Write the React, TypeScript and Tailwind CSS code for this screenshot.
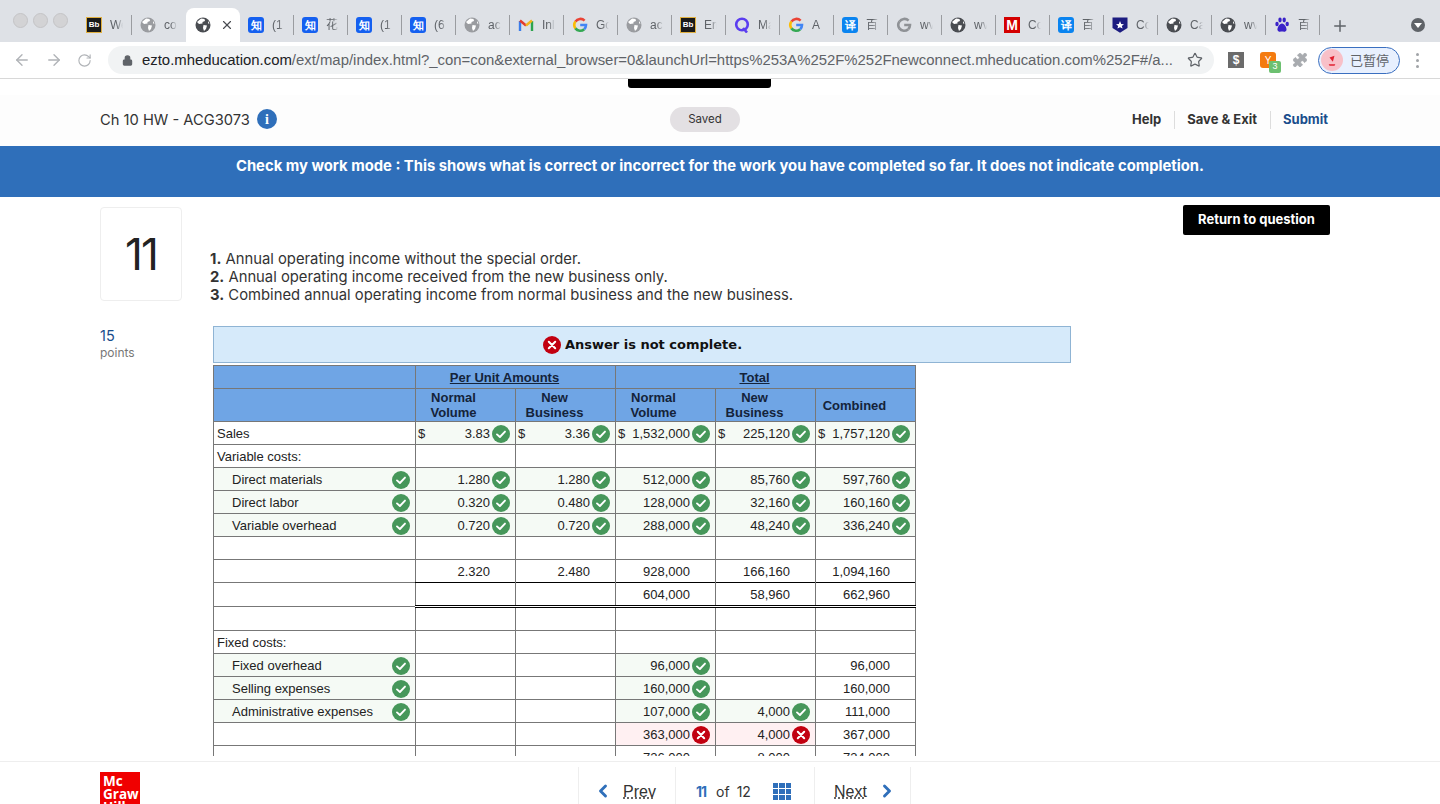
import React from "react";
import { ArrowLeft, ArrowRight, RotateCw, Lock, Star, Puzzle, Plus, ChevronLeft, ChevronRight, X } from "lucide-react";

type Fav = "bb" | "globe" | "zhi" | "gmail" | "g" | "q" | "gg" | "m" | "yi" | "shield" | "paw";
const tabs: { f: Fav; t: string; dark?: boolean; active?: boolean }[] = [
  { f: "bb", t: "We" }, { f: "globe", t: "co" }, { f: "globe", t: "", dark: true, active: true },
  { f: "zhi", t: "(1" }, { f: "zhi", t: "花" }, { f: "zhi", t: "(1" }, { f: "zhi", t: "(6" },
  { f: "globe", t: "ac" }, { f: "gmail", t: "Inl" }, { f: "g", t: "Go" }, { f: "globe", t: "ac" },
  { f: "bb", t: "Err" }, { f: "q", t: "Ma" }, { f: "g", t: "A" }, { f: "yi", t: "百" },
  { f: "gg", t: "wv" }, { f: "globe", t: "wv", dark: true }, { f: "m", t: "Co" }, { f: "yi", t: "百" },
  { f: "shield", t: "Co" }, { f: "globe", t: "Ca", dark: true }, { f: "globe", t: "wv", dark: true }, { f: "paw", t: "百" },
];

function Favicon({ f, dark }: { f: Fav; dark?: boolean }) {
  if (f === "bb") return <span className="w-4 h-4 bg-[#1a1a1a] border border-[#e0b040] text-white text-[8px] font-bold flex items-center justify-center shrink-0">Bb</span>;
  if (f === "zhi") return <span className="w-4 h-4 rounded-[3px] bg-[#1560f0] text-white text-[11px] font-bold flex items-center justify-center shrink-0">知</span>;
  if (f === "yi") return <span className="w-4 h-4 rounded-[3px] bg-[#0a84f0] text-white text-[11px] font-bold flex items-center justify-center shrink-0">译</span>;
  if (f === "m") return <span className="w-4 h-4 bg-[#d40000] text-white text-[14px] font-bold flex items-center justify-center shrink-0">M</span>;
  if (f === "globe") {
    const c = dark ? "#4a4d52" : "#9a9ca0";
    return (
      <svg viewBox="0 0 16 16" className="w-4 h-4 shrink-0">
        <circle cx="8" cy="8" r="7.5" fill={c} />
        <path d="M6 1.5 L9.5 2 L10 4 L7.5 5 L7.5 6.5 L4 7 L2 5 Z M8.5 8 L12 8.5 L11 12 L9 14 L8 11 Z M13 4 L14.5 6.5 L13 6.5 Z" fill="#fff" />
      </svg>
    );
  }
  if (f === "gmail") return (
    <svg viewBox="0 0 16 16" className="w-4 h-4 shrink-0" fill="none" strokeWidth="2.4">
      <path d="M2 14V4" stroke="#3b7dea" /><path d="M14 14V4" stroke="#2da44e" />
      <path d="M2 3.5 L8 8.5" stroke="#e33b2e" /><path d="M14 3.5 L8 8.5" stroke="#f3b41b" />
    </svg>
  );
  if (f === "g" || f === "gg") {
    const mono = f === "gg";
    return (
      <svg viewBox="0 0 16 16" className="w-4 h-4 shrink-0" fill="none" strokeWidth="2.6">
        <path d="M12.6 3.6 A6 6 0 0 0 3.4 4.6" stroke={mono ? "#8f9296" : "#ea4335"} />
        <path d="M3.4 4.6 A6 6 0 0 0 3.4 11.4" stroke={mono ? "#8f9296" : "#fbbc05"} />
        <path d="M3.4 11.4 A6 6 0 0 0 12.2 12.2" stroke={mono ? "#8f9296" : "#34a853"} />
        <path d="M12.2 12.2 A6 6 0 0 0 14 8 H8.2" stroke={mono ? "#8f9296" : "#4285f4"} />
      </svg>
    );
  }
  if (f === "q") return (
    <svg viewBox="0 0 16 16" className="w-4 h-4 shrink-0" fill="none" stroke="#5b3df0" strokeWidth="2.6">
      <circle cx="8" cy="7.5" r="5.8" /><path d="M9 11 L13 15.5" />
    </svg>
  );
  if (f === "shield") return (
    <svg viewBox="0 0 16 16" className="w-4 h-4 shrink-0">
      <path d="M0.5 0.5 H15.5 V11 L8 15.8 L0.5 11 Z" fill="#1c1c80" />
      <path d="M8 4 L9.2 7 L12 7.2 L9.8 9 L10.6 11.6 L8 10.2 L5.4 11.6 L6.2 9 L4 7.2 L6.8 7 Z" fill="#fff" />
    </svg>
  );
  return (
    <svg viewBox="0 0 16 16" className="w-4 h-4 shrink-0" fill="#3a22c8">
      <ellipse cx="3" cy="7" rx="1.7" ry="2.2" /><ellipse cx="6" cy="3" rx="1.7" ry="2.4" /><ellipse cx="10.2" cy="3" rx="1.7" ry="2.4" /><ellipse cx="13.2" cy="7" rx="1.7" ry="2.2" />
      <path d="M8 6.5 C5.5 6.5 3 11 3.5 13 C4 15.5 7 14.5 8 14.5 C9 14.5 12 15.5 12.5 13 C13 11 10.5 6.5 8 6.5 Z" />
    </svg>
  );
}

function Ok() {
  return (
    <svg viewBox="0 0 18 18" className="w-[18px] h-[18px] shrink-0">
      <circle cx="9" cy="9" r="9" fill="#46975a" />
      <path d="M5 9.4 L7.9 12 L13 6.6" fill="none" stroke="#fff" strokeWidth="1.9" strokeLinecap="round" strokeLinejoin="round" />
    </svg>
  );
}
function Bad() {
  return (
    <svg viewBox="0 0 18 18" className="w-[18px] h-[18px] shrink-0">
      <circle cx="9" cy="9" r="9" fill="#c20010" />
      <path d="M5.8 5.8 L12.2 12.2 M12.2 5.8 L5.8 12.2" fill="none" stroke="#fff" strokeWidth="2" strokeLinecap="round" />
    </svg>
  );
}

type Cell = { v?: string; s?: "ok" | "bad"; d?: boolean };
type Row = { label?: string; indent?: boolean; check?: boolean; top?: boolean; dbl?: boolean; cells: Cell[] };
const o = (v: string, d?: boolean): Cell => ({ v, s: "ok", d });
const b = (v: string): Cell => ({ v, s: "bad" });
const p = (v: string): Cell => ({ v });
const e: Cell = {};
const blanks = [e, e, e, e, e];

const rows: Row[] = [
  { label: "Sales", cells: [o("3.83", true), o("3.36", true), o("1,532,000", true), o("225,120", true), o("1,757,120", true)] },
  { label: "Variable costs:", cells: blanks },
  { label: "Direct materials", indent: true, check: true, cells: [o("1.280"), o("1.280"), o("512,000"), o("85,760"), o("597,760")] },
  { label: "Direct labor", indent: true, check: true, cells: [o("0.320"), o("0.480"), o("128,000"), o("32,160"), o("160,160")] },
  { label: "Variable overhead", indent: true, check: true, cells: [o("0.720"), o("0.720"), o("288,000"), o("48,240"), o("336,240")] },
  { cells: blanks },
  { top: true, cells: [p("2.320"), p("2.480"), p("928,000"), p("166,160"), p("1,094,160")] },
  { top: true, dbl: true, cells: [e, e, p("604,000"), p("58,960"), p("662,960")] },
  { cells: blanks },
  { label: "Fixed costs:", cells: blanks },
  { label: "Fixed overhead", indent: true, check: true, cells: [e, e, o("96,000"), e, p("96,000")] },
  { label: "Selling expenses", indent: true, check: true, cells: [e, e, o("160,000"), e, p("160,000")] },
  { label: "Administrative expenses", indent: true, check: true, cells: [e, e, o("107,000"), o("4,000"), p("111,000")] },
  { cells: [e, e, b("363,000"), b("4,000"), p("367,000")] },
  { top: true, cells: [e, e, p("726,000"), p("8,000"), p("734,000")] },
];

function ValueCell({ c, top, dbl }: { c: Cell; top?: boolean; dbl?: boolean }) {
  const bg = c.s === "ok" ? "bg-[#f5faf5]" : c.s === "bad" ? "bg-[#fff0f2]" : "bg-white";
  const tb = top ? "border-t-black" : "";
  const bb = dbl ? "border-b-[3px] border-b-black border-double" : "";
  return (
    <td className={`border border-[#777777] h-[23px] p-0 ${bg} ${tb} ${bb}`}>
      <div className="flex items-center h-[22px] pt-[2px] pl-[2px] pr-[5px]">
        {c.d && <span>$</span>}
        <span className="ml-auto mr-[2px]">{c.v}</span>
        {c.s === "ok" ? <Ok /> : c.s === "bad" ? <Bad /> : <span className="w-[18px] shrink-0" />}
      </div>
    </td>
  );
}

export default function App() {
  return (
    <div className="w-[1440px] h-[804px] overflow-hidden flex flex-col bg-white text-[#222] font-['Liberation_Sans',sans-serif]">
      {/* tab strip */}
      <div className="h-[42px] bg-[#dee1e6] flex shrink-0">
        <div className="w-[78px] flex items-start pt-[13px] pl-[13px] gap-[5px] shrink-0">
          <span className="w-[15px] h-[15px] rounded-full bg-[#d3d3d5] border border-[#c4c4c6]" />
          <span className="w-[15px] h-[15px] rounded-full bg-[#d3d3d5] border border-[#c4c4c6]" />
          <span className="w-[15px] h-[15px] rounded-full bg-[#d3d3d5] border border-[#c4c4c6]" />
        </div>
        <div className="flex items-end h-full">
          {tabs.map((t, i) =>
            t.active ? (
              <div key={i} className="w-[54px] h-[34px] bg-white rounded-t-lg flex items-center pl-[9px] shrink-0 gap-[9px] mt-[8px]">
                <Favicon f={t.f} dark={t.dark} />
                <X size={14} strokeWidth={2} className="text-[#4a4d52]" />
              </div>
            ) : (
              <div key={i} className="w-[54px] h-[34px] flex items-center pl-[8px] shrink-0 gap-[8px]">
                <Favicon f={t.f} dark={t.dark} />
                <span className="flex-1 overflow-hidden whitespace-nowrap text-[12px] text-[#5f6368] [mask-image:linear-gradient(to_right,black_50%,transparent)] font-['Liberation_Sans','Noto_Sans_CJK_SC',sans-serif]">{t.t}</span>
                {tabs[i + 1] && tabs[i + 1].active ? <span className="w-px" /> : <span className="w-px h-[20px] bg-[#9a9ca0] shrink-0" />}
              </div>
            )
          )}
        </div>
        <div className="flex items-center pl-[15px] pt-[9px]">
          <Plus size={18} strokeWidth={2} className="text-[#5f6368] -ml-[4px]" />
        </div>
        <div className="flex-1 flex items-center justify-end pr-[15px] pt-[8px]">
          <span className="w-[14px] h-[14px] rounded-full bg-[#5f6368] flex items-center justify-center">
            <span className="w-0 h-0 border-l-[4px] border-r-[4px] border-t-[5px] border-l-transparent border-r-transparent border-t-white" />
          </span>
        </div>
      </div>
      {/* toolbar */}
      <div className="h-[37px] bg-white border-b border-[#d8d8d8] flex items-center shrink-0">
        <div className="w-[108px] flex items-center pl-[13px] gap-[14px] text-[#b0b3b7] shrink-0">
          <ArrowLeft size={18} strokeWidth={1.8} />
          <ArrowRight size={18} strokeWidth={1.8} />
          <RotateCw size={15} strokeWidth={1.8} />
        </div>
        <div className="w-[1106px] h-[28px] rounded-full bg-[#f1f3f4] flex items-center pl-[14px] pr-[11px] text-[14.9px] shrink-0">
          <Lock size={11} strokeWidth={2.5} fill="currentColor" className="text-[#5f6368] shrink-0" />
          <span className="ml-[9px] pt-[1px] text-[#202124] whitespace-nowrap">ezto.mheducation.com<span className="text-[#5f6368]">/ext/map/index.html?_con=con&amp;external_browser=0&amp;launchUrl=https%253A%252F%252Fnewconnect.mheducation.com%252F#/a...</span></span>
          <Star size={16} strokeWidth={1.8} className="ml-auto text-[#5f6368] shrink-0" />
        </div>
        <div className="flex items-center ml-[14px]">
          <span className="w-[16px] h-[16px] bg-[#6b6b6b] text-white text-[12px] font-bold flex items-center justify-center">$</span>
          <span className="relative ml-[16px] w-[16px] h-[16px] rounded-[3px] bg-[#f47b10] text-white text-[10px] flex items-center justify-center">
            Y
            <span className="absolute left-[9px] top-[9px] w-[12px] h-[12px] rounded-[2px] bg-[#6cc070] text-white text-[9px] flex items-center justify-center">3</span>
          </span>
          <Puzzle size={16} fill="#a8abaf" strokeWidth={1} className="ml-[16px] text-[#a8abaf]" />
          <div className="ml-[10px] w-[82px] h-[27px] rounded-full border-[1.5px] border-[#3a6fc0] bg-[#e8f0fe] flex items-center pl-[2px]">
            <span className="w-[22px] h-[22px] rounded-full bg-[#f8c0c8] flex items-center justify-center">
              <svg viewBox="0 0 12 16" className="w-[10px] h-[14px]">
                <path d="M3 5 L7 10 L9 3 Z" fill="#e02030" /><path d="M2 13 H10 L9 15 H3 Z" fill="#e02030" />
              </svg>
            </span>
            <span className="ml-[7px] text-[13px] text-[#5f6368] font-['Noto_Sans_CJK_SC',sans-serif]">已暂停</span>
          </div>
          <span className="ml-[16px] flex flex-col gap-[3px]">
            <span className="w-[3px] h-[3px] rounded-full bg-[#a0a3a7]" />
            <span className="w-[3px] h-[3px] rounded-full bg-[#a0a3a7]" />
            <span className="w-[3px] h-[3px] rounded-full bg-[#a0a3a7]" />
          </span>
        </div>
      </div>
      {/* clipped tooltip */}
      <div className="h-[16px] shrink-0 bg-white">
        <div className="ml-[628px] w-[143px] h-[9px] bg-black rounded-b-[3px]" />
      </div>
      {/* assignment header */}
      <div className="h-[51px] shrink-0 bg-[#fdfdfd] pl-[100px] pr-[112px] pb-[2px] flex items-center font-['Inter',sans-serif]">
        <div className="w-[570px] flex items-center gap-[7px] text-[14.7px] text-[#333]">
          <span className="pt-[1px]">Ch 10 HW - ACG3073</span>
          <span className="w-[20px] h-[20px] rounded-full bg-[#2f6fba] text-white text-[14px] font-bold flex items-center justify-center font-['Liberation_Serif',serif]">i</span>
        </div>
        <span className="w-[70px] h-[25px] rounded-full bg-[#e3e0e3] text-[11.5px] text-[#333] flex items-center justify-center">Saved</span>
        <div className="ml-auto flex items-center text-[13px] font-bold text-[#333]">
          <span>Help</span>
          <span className="w-px h-[18px] bg-[#ddd] mx-[12.5px]" />
          <span>Save &amp; Exit</span>
          <span className="w-px h-[18px] bg-[#ddd] mx-[12.5px]" />
          <span className="text-[#1a4d8c]">Submit</span>
        </div>
      </div>
      {/* banner */}
      <div className="h-[51px] shrink-0 bg-[#2f6fba] text-white font-bold text-[14.8px] flex justify-center pt-[9px] font-['Inter',sans-serif]">
        Check my work mode : This shows what is correct or incorrect for the work you have completed so far. It does not indicate completion.
      </div>
      {/* content */}
      <div className="h-[559px] shrink-0 overflow-hidden pl-[100px] pr-[110px] pt-[10px]">
        <div className="flex">
          <div className="w-[82px] h-[94px] border border-[#eeeeee] rounded-[4px] flex items-center justify-center text-[44px] text-[#222] font-['Inter',sans-serif] shrink-0 tracking-[-2px]">11</div>
          <div className="ml-[28px] pt-[43px] text-[14.8px] leading-[18px] text-[#333] font-['Inter',sans-serif]">
            <p><b>1.</b> Annual operating income without the special order.</p>
            <p><b>2.</b> Annual operating income received from the new business only.</p>
            <p><b>3.</b> Combined annual operating income from normal business and the new business.</p>
          </div>
          <div className="ml-auto -mt-[2px]">
            <span className="flex w-[147px] h-[30px] bg-black rounded-[2px] text-white text-[13px] font-bold items-center justify-center font-['Inter',sans-serif]">Return to question</span>
          </div>
        </div>
        <div className="flex mt-[21px]">
          <div className="w-[113px] shrink-0 font-['Inter',sans-serif] pt-[1px]">
            <div className="text-[14.5px] leading-[18px] text-[#1a4d8c] pt-[1px]">15</div>
            <div className="text-[12px] leading-[16px] text-[#777]">points</div>
          </div>
          <div className="flex-1 pt-[1px]">
            <div className="w-[858px] h-[37px] bg-[#d6eafa] border border-[#8fb4d4] flex items-center justify-center gap-[4px] font-['DejaVu_Sans',sans-serif] font-bold text-[13px] text-[#111] pl-[1px]">
              <Bad />
              <span>Answer is not complete.</span>
            </div>
            <table className="mt-[2px] w-[703px] table-fixed border-collapse text-[13px] text-[#222]">
              <colgroup>
                <col className="w-[202px]" /><col className="w-[100px]" /><col className="w-[100px]" /><col className="w-[100px]" /><col className="w-[100px]" /><col className="w-[100px]" />
              </colgroup>
              <thead>
                <tr className="bg-[#6fa5e5] font-bold text-[#14233a]">
                  <th className="border border-[#777777] h-[23px] p-0" />
                  <th colSpan={2} className="border border-[#777777] h-[23px] p-0 pt-[2px] pr-[22px] underline font-bold">Per Unit Amounts</th>
                  <th colSpan={3} className="border border-[#777777] h-[23px] p-0 pt-[2px] pr-[22px] underline font-bold">Total</th>
                </tr>
                <tr className="bg-[#6fa5e5] text-[#14233a]">
                  <th className="border border-[#777777] h-[33px] p-0" />
                  {["Normal Volume", "New Business", "Normal Volume", "New Business", "Combined"].map((h, i) => (
                    <th key={i} className={`border border-[#777777] h-[33px] p-0 leading-[15px] font-bold ${h === "Normal Volume" ? "pr-[24px]" : "pr-[22px]"}`}>
                      {h.split(" ").map((w, j) => <div key={j}>{w}</div>)}
                    </th>
                  ))}
                </tr>
              </thead>
              <tbody>
                {rows.map((r, i) => (
                  <tr key={i}>
                    <td className={`border border-[#777777] h-[23px] p-0 ${r.check ? "bg-[#f5faf5]" : "bg-white"}`}>
                      <div className={`flex items-center h-[22px] pt-[2px] pr-[5px] ${r.indent ? "pl-[18px]" : "pl-[3px]"}`}>
                        <span>{r.label}</span>
                        {r.check && <span className="ml-auto"><Ok /></span>}
                      </div>
                    </td>
                    {r.cells.map((c, j) => <ValueCell key={j} c={c} top={r.top} dbl={r.dbl} />)}
                  </tr>
                ))}
              </tbody>
            </table>
          </div>
        </div>
      </div>
      {/* gap + footer */}
      <div className="h-[5px] shrink-0 bg-white" />
      <div className="flex-1 border-t border-[#eeeeee] flex pl-[100px] min-h-0">
        <div className="w-[40px] h-[60px] mt-[10px] bg-[#f00000] text-white font-bold text-[13.5px] leading-[13px] pl-[3px] pt-[3px] shrink-0 font-['Open_Sans',sans-serif]">
          Mc<br />Graw<br />Hill
        </div>
        <div className="ml-[438px] mt-[5px] flex items-start h-[60px] text-[16px] text-[#333]">
          <div className="w-[97px] h-full border-l border-[#eeeeee] flex items-start pt-[13px] pl-[14px] gap-[10px]">
            <ChevronLeft size={20} strokeWidth={3.5} className="text-[#2f6fba] mt-[1px]" />
            <span className="underline decoration-dotted">Prev</span>
          </div>
          <div className="w-[139px] h-full border-l border-[#eeeeee] flex items-start pt-[14px] pl-[20px] font-['Inter',sans-serif]">
            <span className="font-bold text-[14px] tracking-[-1px] text-[#2f6fba]">11</span>
            <span className="ml-[10px] text-[14px]">of</span>
            <span className="ml-[7px] text-[14px]">12</span>
            <span className="ml-[22px] grid grid-cols-3 gap-[1px] w-[18px] mt-[2px]">
              {Array.from({ length: 9 }).map((_, i) => <span key={i} className="h-[5px] bg-[#2f6fba]" />)}
            </span>
          </div>
          <div className="w-[97px] h-full border-l border-r border-[#eeeeee] flex items-start pt-[13px] pl-[19px] gap-[10px]">
            <span className="underline decoration-dotted">Next</span>
            <ChevronRight size={20} strokeWidth={3.5} className="text-[#2f6fba] mt-[1px]" />
          </div>
        </div>
      </div>
    </div>
  );
}
